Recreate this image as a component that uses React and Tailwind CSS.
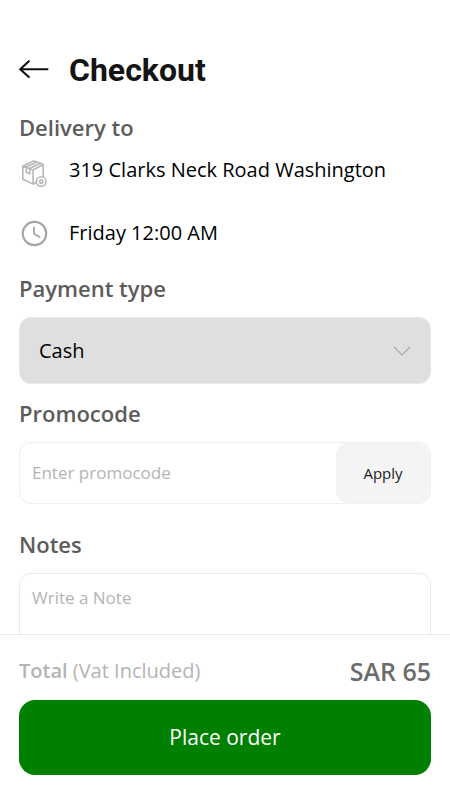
import { useState } from 'react'

const FONT = "font-['Open_Sans','Noto_Sans',sans-serif]"

function BackIcon() {
  return (
    <svg width="30" height="20" viewBox="0 0 30 20" fill="none" stroke="#111" strokeWidth="2.1" strokeLinecap="round" strokeLinejoin="round">
      <path d="M28.5 9.2H1.5M9.8 1.3L1.2 9.2l8.6 7.8" />
    </svg>
  )
}

function PackageIcon() {
  return (
    <svg width="28" height="28" viewBox="0 0 28 28" fill="none" stroke="#b8b8b8" strokeWidth="1.6" strokeLinecap="round" strokeLinejoin="round">
      <path d="M2.8 6L13.8 1l9.4 3.2v12.4M2.8 6v13.2l10.3 4.9 3-1.3M2.8 6L13.1 10v14M13.1 10l10.1-5.5" />
      <path d="M5.9 7L16.8 2.2M9.4 8.4L20.2 3.4" />
      <path d="M6.2 7.6v4.6l3.6 1.6V9" />
      <circle cx="21.2" cy="21.6" r="4.8" fill="#fff" />
      <ellipse cx="21.2" cy="21.6" rx="1.5" ry="1.9" />
    </svg>
  )
}

function ClockIcon() {
  return (
    <svg width="28" height="28" viewBox="0 0 28 28" fill="none" stroke="#a6a6a6" strokeWidth="1.8" strokeLinecap="round" strokeLinejoin="round">
      <circle cx="14.5" cy="14.5" r="11.7" strokeWidth="2.2" />
      <path d="M14 8.5v6.3l5.5 3.3" />
    </svg>
  )
}

function ChevronIcon() {
  return (
    <svg className="pointer-events-none absolute right-5 top-1/2 -translate-y-1/2" width="18" height="10" viewBox="0 0 18 10" fill="none" stroke="#a8a8a8" strokeWidth="1.2">
      <path d="M1 1l8 8 8-8" />
    </svg>
  )
}

function SectionTitle({ as: Tag = 'h2', children, ...rest }) {
  return (
    <Tag className="block text-[22px] leading-8 font-semibold text-[#5c5c5c]" {...rest}>
      {children}
    </Tag>
  )
}

export default function App() {
  const [payment, setPayment] = useState('cash')
  const [promo, setPromo] = useState('')
  const [note, setNote] = useState('')

  return (
    <div className={`flex h-dvh flex-col bg-white ${FONT}`}>
      <main className="min-h-0 flex-1 overflow-x-hidden overflow-y-auto px-[19px] pt-12 [scrollbar-width:none]">
        <header className="flex items-center gap-5">
          <button type="button" aria-label="Back" className="cursor-pointer">
            <BackIcon />
          </button>
          <h1 className="font-[Roboto,sans-serif] text-[32px] leading-11 font-bold text-[#141414]">Checkout</h1>
        </header>

        {/* Delivery */}
        <section className="pt-[19px]">
          <SectionTitle>Delivery to</SectionTitle>
          <div className="mt-[13px] flex items-start gap-5">
            <span className="flex w-[30px] shrink-0 justify-center pt-1"><PackageIcon /></span>
            <p className="text-xl leading-7 text-black">319 Clarks Neck Road Washington</p>
          </div>
          <div className="mt-[31px] flex items-center gap-5">
            <span className="flex w-[30px] shrink-0 justify-center"><ClockIcon /></span>
            <p className="text-xl leading-7 text-black">Friday 12:00 AM</p>
          </div>
        </section>

        {/* Payment */}
        <section className="pt-[25px]">
          <SectionTitle as="label" htmlFor="payment">Payment type</SectionTitle>
          <div className="relative mt-[13px]">
            <select
              id="payment"
              value={payment}
              onChange={(e) => setPayment(e.target.value)}
              className="block h-[67px] w-full cursor-pointer appearance-none rounded-xl border border-[#e8e8e8] bg-[#dfdfdf] px-[19px] text-xl text-black"
            >
              <option value="cash">Cash</option>
              <option value="card">Card</option>
            </select>
            <ChevronIcon />
          </div>
        </section>

        {/* Promocode */}
        <section className="pt-[13px]">
          <SectionTitle as="label" htmlFor="promo">Promocode</SectionTitle>
          <div className="mt-[13px] flex h-[62px] overflow-hidden rounded-xl border border-[#efefef]">
            <input
              id="promo"
              type="text"
              value={promo}
              onChange={(e) => setPromo(e.target.value)}
              placeholder="Enter promocode"
              className="min-w-0 flex-1 px-3 text-[17px] text-black outline-none placeholder:text-[#b4b4b4]"
            />
            <button type="button" className="w-[94px] shrink-0 cursor-pointer rounded-xl bg-[#f4f4f4] text-[15px] text-[#222]">
              Apply
            </button>
          </div>
        </section>

        {/* Notes */}
        <section className="pt-6">
          <SectionTitle as="label" htmlFor="note">Notes</SectionTitle>
          <textarea
            id="note"
            value={note}
            onChange={(e) => setNote(e.target.value)}
            placeholder="Write a Note"
            rows={4}
            className="mt-[13px] block w-full resize-none rounded-xl border border-[#ebebeb] px-3 py-3 text-[17px] leading-6 text-black outline-none placeholder:text-[#b4b4b4]"
          />
        </section>
      </main>

      <footer className="border-t border-[#e9e9e9] px-[19px] pt-5 pb-[25px]">
        <div className="flex items-center justify-between">
          <p className="text-xl leading-8 text-[#b4b4b4]">
            <span className="font-semibold">Total</span> (Vat Included)
          </p>
          <p className="text-[25px] leading-8 font-semibold text-[#6b6b6b]">SAR 65</p>
        </div>
        <button type="button" className="mt-[13px] block h-[75px] w-full cursor-pointer rounded-2xl bg-[#008000] text-[21px] text-white">
          Place order
        </button>
      </footer>
    </div>
  )
}
